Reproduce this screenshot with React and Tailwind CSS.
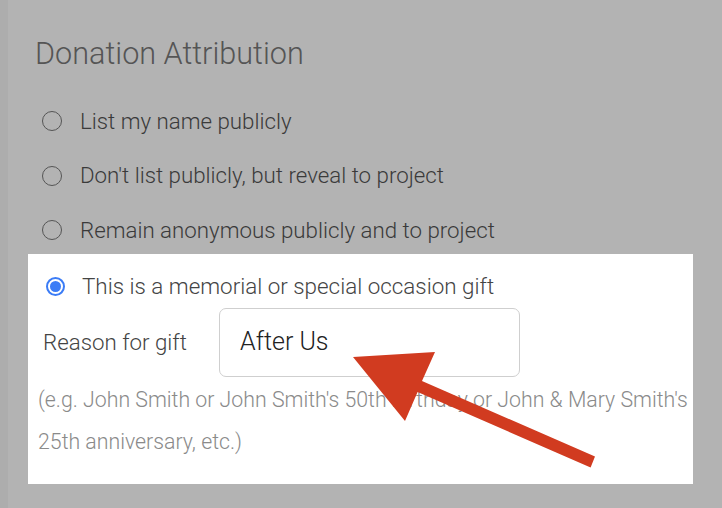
import React from 'react'

function Radio({ checked }) {
  if (checked) {
    return (
      <span className="w-[19px] h-[19px] rounded-full border-[2px] border-[#3b7cf6] flex items-center justify-center shrink-0">
        <span className="w-[11px] h-[11px] rounded-full bg-[#3b7cf6]" />
      </span>
    )
  }
  return <span className="w-[20px] h-[20px] rounded-full border-[1.5px] border-[#555] shrink-0" />
}

const options = [
  'List my name publicly',
  "Don't list publicly, but reveal to project",
  'Remain anonymous publicly and to project',
]

export default function App() {
  return (
    <div className="relative w-[722px] h-[508px] overflow-hidden flex bg-[#b3b3b3] font-['Roboto','Liberation_Sans',sans-serif] font-light">
      <div className="w-[8px] h-full bg-[#adadad]" />
      <div className="flex-1 flex flex-col">
        <h2 className="pl-[27px] pt-[36px] text-[30.6px] leading-[36px] text-[#555] font-light">Donation Attribution</h2>

        <div className="mt-[22px] flex flex-col">
          {options.map((label) => (
            <label key={label} className="h-[54.5px] flex items-center gap-[18px] pl-[34px] text-[22.3px] text-[#3a3a3a]">
              <Radio />
              <span>{label}</span>
            </label>
          ))}
        </div>

        <div className="ml-[20px] mt-[-4px] w-[665px] h-[230px] bg-white flex flex-col">
          <label className="h-[66px] flex items-center gap-[17px] pl-[18px] text-[22.4px] text-[#444]">
            <Radio checked />
            <span>This is a memorial or special occasion gift</span>
          </label>
          <div className="flex items-center h-[69px] mt-[-12px]">
            <span className="pl-[15px] pt-[2px] w-[191px] text-[22.3px] text-[#444]">Reason for gift</span>
            <div className="w-[301px] h-[69px] rounded-[7px] border border-[#cfcfcf] flex items-center pl-[20px] text-[25px] text-[#222] font-light">
              After Us
            </div>
          </div>
          <p className="pl-[10px] pr-[4px] mt-[2px] text-[21.3px] leading-[42px] text-[#8a8a8a]">
            (e.g. John Smith or John Smith's 50th birthday or John &amp; Mary Smith's 25th anniversary, etc.)
          </p>
        </div>
      </div>

      <svg className="absolute inset-0 pointer-events-none" width="722" height="508" viewBox="0 0 722 508">
        <polygon
          points="353,357 435,352 422,381 595,456.5 590.6,467.5 417.6,392 405,421"
          fill="#d13b20"
        />
      </svg>
    </div>
  )
}
